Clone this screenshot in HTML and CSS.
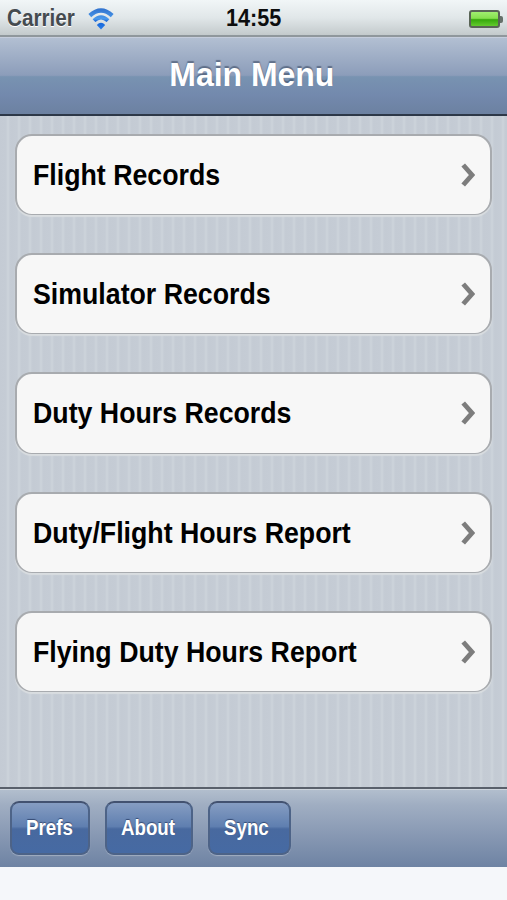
FILE: index.html
```html
<!DOCTYPE html>
<html lang="en">
<head>
    <meta charset="UTF-8">
    <meta name="viewport" content="width=device-width, initial-scale=1.0">
    <title>Main Menu</title>
    <link rel="stylesheet" href="styles.css">
</head>
<body>

    <div class="status-bar">
        <span class="carrier">Carrier</span>
        <svg class="wifi" width="26" height="22" viewBox="0 0 26 22">
            <defs>
                <linearGradient id="wifiFill" x1="0" y1="0" x2="0" y2="22" gradientUnits="userSpaceOnUse">
                    <stop offset="0" stop-color="#2f70cc"/>
                    <stop offset="0.5" stop-color="#4a9aec"/>
                    <stop offset="0.6" stop-color="#1462d8"/>
                    <stop offset="1" stop-color="#2a7ee8"/>
                </linearGradient>
            </defs>
            <path d="M1.8 7.6 Q13 -2.6 24.2 7.6" fill="none" stroke="url(#wifiFill)" stroke-width="4.2"/>
            <path d="M6 12.6 Q13 6 20 12.6" fill="none" stroke="url(#wifiFill)" stroke-width="4"/>
            <path d="M8.8 17 Q13 12.6 17.2 17 L13 21.4 Z" fill="url(#wifiFill)"/>
        </svg>
        <span class="clock">14:55</span>
        <div class="battery"></div>
    </div>

    <header>
        <h1>Main Menu</h1>
    </header>

    <ul class="menu">
        <li><span>Flight Records</span><svg class="chevron" viewBox="0 0 14 24"><path d="M2.2 2 L11 12 L2.2 22"/></svg></li>
        <li><span>Simulator Records</span><svg class="chevron" viewBox="0 0 14 24"><path d="M2.2 2 L11 12 L2.2 22"/></svg></li>
        <li><span>Duty Hours Records</span><svg class="chevron" viewBox="0 0 14 24"><path d="M2.2 2 L11 12 L2.2 22"/></svg></li>
        <li><span>Duty/Flight Hours Report</span><svg class="chevron" viewBox="0 0 14 24"><path d="M2.2 2 L11 12 L2.2 22"/></svg></li>
        <li><span>Flying Duty Hours Report</span><svg class="chevron" viewBox="0 0 14 24"><path d="M2.2 2 L11 12 L2.2 22"/></svg></li>
    </ul>

    <div class="toolbar">
        <button class="prefs"><span>Prefs</span></button>
        <button class="about"><span>About</span></button>
        <button class="sync"><span>Sync</span></button>
    </div>

</body>
</html>
```
FILE: styles.css
```css
* {
    box-sizing: border-box;
}
body {
    margin: 0;
    height: 900px;
    overflow: hidden;
    display: flex;
    flex-direction: column;
    background-color: #f5f7fa;
    font-family: "Liberation Sans", Arial, sans-serif;
    font-weight: bold;
}
/* narrow lettering */
span, h1 {
    display: inline-block;
    white-space: nowrap;
    transform-origin: left center;
}
.status-bar {
    display: grid;
    grid-template-columns: 81px 138px 1fr 38px;
    align-items: center;
    height: 37px;
    padding-left: 7px;
    border-bottom: 2px solid #8f979c;
    background: linear-gradient(#f1f6f7, #e1e7e9 50%, #c3cacc);
    font-size: 23px;
    line-height: 37px;
}
.carrier {
    color: #454b4f;
    text-shadow: 0 1px 0 #fff;
    transform: scaleX(0.9);
}
.clock {
    color: #0c0d0e;
    transform: scaleX(0.94);
}
.battery {
    position: relative;
    width: 31px;
    height: 18px;
    border: 2px solid #596456;
    border-radius: 3px;
    background: linear-gradient(#a0ef70, #86e04e 45%, #36a80c 55%, #63cb2e);
}
.battery::after {
    content: "";
    position: absolute;
    right: -5px;
    top: 4px;
    width: 3px;
    height: 7px;
    border-radius: 0 2px 2px 0;
    background-color: #65706a;
}
header {
    height: 79px;
    padding-right: 4px;
    border-top: 1px solid #c5cddc;
    border-bottom: 2px solid #2d3848;
    background: linear-gradient(#b2bfd2, #8c9dba 49%, #7893b1 51%, #7389ad 75%, #6c81a1);
    text-align: center;
}
h1 {
    margin: 0;
    color: #fff;
    font-size: 34px;
    line-height: 73px;
    text-shadow: 0 -2px 1px rgba(60, 75, 100, 0.6);
    transform: scaleX(0.94);
    transform-origin: center;
}
.menu {
    height: 671px;
    margin: 0;
    padding: 18px 15px 0;
    list-style: none;
    display: flex;
    flex-direction: column;
    gap: 38px;
    background: repeating-linear-gradient(90deg, #c4cbd4 0, #c5ccd5 6px, #cdd4db 8px, #c5ccd5 10px, #c4cbd4 11px);
}
.menu li {
    display: flex;
    justify-content: space-between;
    align-items: center;
    height: 81.2px;
    flex: none;
    padding: 0 15px 0 15.5px;
    border: 2px solid #a8abaf;
    border-bottom-width: 1px;
    border-radius: 17px;
    background-color: #f7f7f7;
    box-shadow: 0 2px 1px #d9dde0;
    font-size: 30px;
    color: #000;
}
.menu span {
    transform: scaleX(0.891);
}
.chevron {
    width: 14px;
    height: 24px;
    flex: none;
}
.chevron path {
    fill: none;
    stroke: #7d7d7d;
    stroke-width: 4.8;
}
.toolbar {
    display: flex;
    align-items: flex-start;
    height: 80px;
    padding: 12px 10px 0;
    border-top: 2px solid #59606b;
    background: linear-gradient(#b3bfce, #a0aec2 20%, #8798b3 60%, #6e83a3);
    box-shadow: inset 0 1px 0 #ced5dd;
}
.toolbar button {
    height: 54px;
    margin-right: 15px;
    padding: 1px 0 0 14px;
    border: 2px solid #4d6387;
    border-top-color: #435270;
    border-radius: 9px;
    background: linear-gradient(#869dc2, #5f7fb0 47%, #48699f 52%, #466aa3);
    box-shadow: 0 1px 1px #a0adc1;
    color: #fff;
    font-family: inherit;
    font-size: 21.5px;
    font-weight: bold;
    text-align: left;
    text-shadow: 0 -1px 1px #354b75;
}
.toolbar span {
    transform: scaleX(0.87);
}
.prefs {
    width: 80px;
}
.about {
    width: 88px;
}
.sync {
    width: 83px;
}
```
